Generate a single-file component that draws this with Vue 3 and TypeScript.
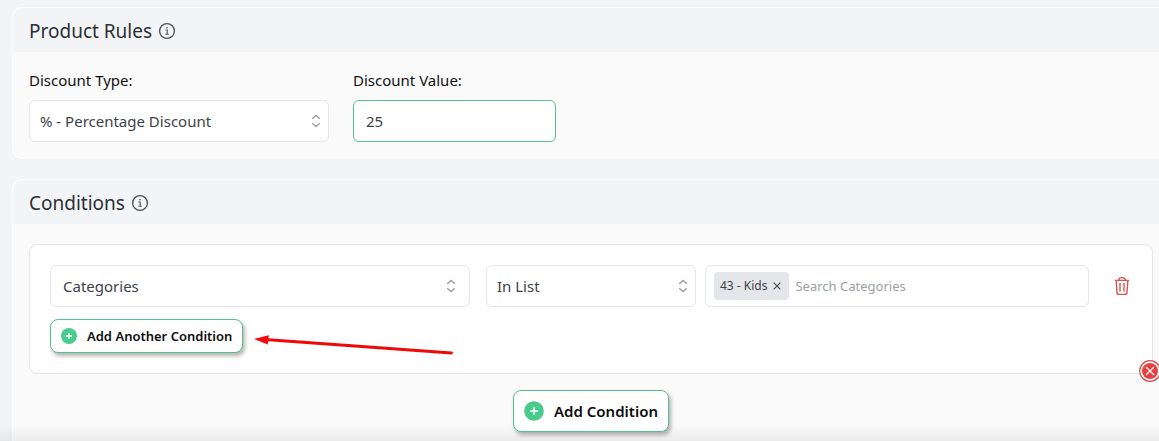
<script setup lang="ts">
import { ref } from 'vue'

const discountType = ref('percentage')
const discountValue = ref('25')
const field = ref('categories')
const operator = ref('in')
const search = ref('')
const tags = ref<string[]>(['43 - Kids'])

function removeTag(tag: string): void {
  tags.value = tags.value.filter((t) => t !== tag)
}
</script>

<template>
  <main class="page">
    <section class="panel">
      <header class="panel-head">
        <h2>Product Rules</h2>
        <button class="icon-btn" type="button" aria-label="About product rules">
          <svg width="18" height="18" viewBox="0 0 18 18" fill="none" stroke="#4a4f56">
            <circle cx="9" cy="9" r="7.4" stroke-width="1.3" />
            <path d="M7.5 8H9.2V12M7.4 12.2H10.8" stroke-width="1.1" />
            <circle cx="9" cy="5.8" r=".8" fill="#4a4f56" stroke="none" />
          </svg>
        </button>
      </header>
      <div class="rules">
        <div class="field type">
          <label for="discount-type">Discount Type:</label>
          <div class="select">
            <select id="discount-type" v-model="discountType">
              <option value="percentage">% - Percentage Discount</option>
            </select>
            <svg class="caret" width="10" height="14" viewBox="0 0 10 14" fill="none" stroke="#9a9ea4" stroke-width="1.3">
              <path d="M1.2 4.8L5 1.4L8.8 4.8M1.2 9.2L5 12.6L8.8 9.2" />
            </svg>
          </div>
        </div>
        <div class="field value">
          <label for="discount-value">Discount Value:</label>
          <input id="discount-value" v-model="discountValue" class="box" type="text" />
        </div>
      </div>
    </section>

    <section class="panel conditions">
      <header class="panel-head">
        <h2>Conditions</h2>
        <button class="icon-btn" type="button" aria-label="About conditions">
          <svg width="18" height="18" viewBox="0 0 18 18" fill="none" stroke="#4a4f56">
            <circle cx="9" cy="9" r="7.4" stroke-width="1.3" />
            <path d="M7.5 8H9.2V12M7.4 12.2H10.8" stroke-width="1.1" />
            <circle cx="9" cy="5.8" r=".8" fill="#4a4f56" stroke="none" />
          </svg>
        </button>
      </header>
      <div class="body">
        <div class="card">
          <div class="row">
            <div class="select wide">
              <select v-model="field" aria-label="Condition field">
                <option value="categories">Categories</option>
              </select>
              <svg class="caret" width="10" height="14" viewBox="0 0 10 14" fill="none" stroke="#9a9ea4" stroke-width="1.3">
                <path d="M1.2 4.8L5 1.4L8.8 4.8M1.2 9.2L5 12.6L8.8 9.2" />
              </svg>
            </div>
            <div class="select operator">
              <select v-model="operator" aria-label="Operator">
                <option value="in">In List</option>
              </select>
              <svg class="caret" width="10" height="14" viewBox="0 0 10 14" fill="none" stroke="#9a9ea4" stroke-width="1.3">
                <path d="M1.2 4.8L5 1.4L8.8 4.8M1.2 9.2L5 12.6L8.8 9.2" />
              </svg>
            </div>
            <div class="tags">
              <span v-for="tag in tags" :key="tag" class="tag">
                {{ tag }}
                <button class="icon-btn" type="button" :aria-label="'Remove ' + tag" @click="removeTag(tag)">
                  <svg width="8" height="8" viewBox="0 0 8 8" stroke="#4b5058" stroke-width="1.2">
                    <path d="M.6 .6L7.4 7.4M7.4 .6L.6 7.4" />
                  </svg>
                </button>
              </span>
              <input v-model="search" type="text" placeholder="Search Categories" aria-label="Search Categories" />
            </div>
            <button class="icon-btn trash" type="button" aria-label="Delete condition">
              <svg width="16" height="20" viewBox="0 0 16 20" fill="none" stroke="#d9534f" stroke-width="1.4">
                <path d="M.8 4.4H15.2M4.6 4.2C4.8 2.3 5.8 1.6 8 1.6S11.2 2.3 11.4 4.2M2.2 4.6L3 16.4C3.1 17.7 3.8 18.4 5 18.4H11C12.2 18.4 12.9 17.7 13 16.4L13.8 4.6" />
                <path d="M6 7V15.4M10 7V15.4" />
              </svg>
            </button>
          </div>
          <div class="another">
            <button class="add small" type="button">
              <svg width="16" height="16" viewBox="0 0 16 16">
                <circle cx="8" cy="8" r="8" fill="#48cb8c" />
                <path d="M8 5V11M5 8H11" stroke="#fff" stroke-width="1.3" />
              </svg>
              Add Another Condition
            </button>
            <svg class="arrow" width="202" height="24" viewBox="0 0 202 24" aria-hidden="true">
              <path d="M12 5.5L198.5 19" stroke="#ee0808" stroke-width="2.8" stroke-linecap="round" />
              <path d="M1 5L15.8 1.2L14.8 10.4Z" fill="#fa0505" />
            </svg>
          </div>
          <button class="icon-btn remove" type="button" aria-label="Remove condition group">
            <svg width="22" height="22" viewBox="0 0 22 22">
              <circle cx="11" cy="11" r="10.3" fill="#fff" stroke="#d94a4a" stroke-width="1.2" />
              <circle cx="11" cy="11" r="8" fill="#e83f42" />
              <path d="M7 7L15 15M15 7L7 15" stroke="#fff" stroke-width="1.2" />
            </svg>
          </button>
        </div>
        <button class="add large" type="button">
          <svg width="20" height="20" viewBox="0 0 20 20">
            <circle cx="10" cy="10" r="9.8" fill="#48cb8c" />
            <path d="M10 6V14M6 10H14" stroke="#fff" stroke-width="1.5" />
          </svg>
          Add Condition
        </button>
      </div>
    </section>
    <div class="fade"></div>
  </main>
</template>

<style>
body {
  background: #f3f4f6;
}
</style>

<style scoped>
* {
  box-sizing: border-box;
}
.page {
  position: relative;
  min-height: 100vh;
  padding: 7px 0 0 12px;
  display: flex;
  flex-direction: column;
  gap: 20px;
  overflow: hidden;
  background: #f3f4f6;
  font: 16px/24px 'Segoe UI', 'Noto Sans', sans-serif;
  color: #3d4249;
}
.panel {
  border: 1px solid #fff;
  border-right: 0;
  border-radius: 10px 0 0 10px;
  background: #fafafa;
}
.conditions {
  flex: 1;
  border-bottom: 0;
  border-radius: 10px 0 0 0;
}
.panel-head {
  display: flex;
  align-items: center;
  gap: 6px;
  height: 44px;
  padding: 2px 16px 0;
  border-radius: 9px 0 0 0;
  background: #f3f4f6;
}
h2 {
  margin: 0;
  font-size: 19px;
  line-height: 28px;
  font-weight: 400;
  color: #2b3036;
}
.icon-btn {
  display: inline-flex;
  padding: 0;
  border: 0;
  background: none;
  cursor: pointer;
}
.rules {
  display: flex;
  gap: 24px;
  padding: 16px;
}
.field {
  display: flex;
  flex-direction: column;
  gap: 8px;
}
.type {
  width: 300px;
}
.value {
  width: 203px;
}
label {
  font-size: 15px;
  line-height: 24px;
  color: #111;
}
.select {
  position: relative;
}
.select select,
.box {
  display: block;
  width: 100%;
  height: 42px;
  margin: 0;
  padding: 0 28px 0 10px;
  border: 1px solid #e4e6e9;
  border-radius: 6px;
  outline: 0;
  appearance: none;
  background: #fff;
  color: inherit;
  font: inherit;
  font-size: 15px;
}
.box {
  padding: 0 12px;
  border-color: #55bf90;
}
.caret {
  position: absolute;
  top: 14px;
  right: 8px;
  pointer-events: none;
}
.body {
  display: flex;
  flex-direction: column;
  align-items: center;
  gap: 16px;
  padding: 20px 6px 9px 16px;
}
.card {
  position: relative;
  width: 100%;
  padding: 20px;
  border: 1px solid #e4e6e9;
  border-radius: 8px;
  background: #fff;
}
.row {
  display: grid;
  grid-template-columns: minmax(0, 436fr) minmax(0, 219fr) minmax(0, 384fr) auto;
  align-items: center;
}
.wide {
  margin-right: 16px;
}
.wide select {
  padding-left: 12px;
}
.wide .caret {
  right: 14px;
}
.operator {
  margin-right: 9px;
}
.tags {
  display: flex;
  align-items: center;
  gap: 6px;
  height: 42px;
  padding: 0 8px;
  border: 1px solid #e4e6e9;
  border-radius: 6px;
}
.tag {
  display: inline-flex;
  align-items: center;
  gap: 6px;
  height: 28px;
  padding: 0 8px 0 6px;
  border-radius: 4px;
  background: #e5e6e9;
  font-size: 12px;
  white-space: nowrap;
}
.tags input {
  flex: 1;
  min-width: 0;
  padding: 0;
  border: 0;
  outline: 0;
  background: none;
  color: inherit;
  font: inherit;
  font-size: 13px;
}
.tags input::placeholder {
  color: #9ca0a8;
  opacity: 1;
}
.trash {
  margin: 0 2px 0 25px;
}
.another {
  position: relative;
  display: flex;
  margin-top: 12px;
}
.arrow {
  position: absolute;
  top: 15px;
  left: 203px;
}
.remove {
  position: absolute;
  right: -9px;
  bottom: -9px;
}
.add {
  position: relative;
  z-index: 2;
  display: inline-flex;
  align-items: center;
  gap: 10px;
  padding: 0 10px;
  border: 1px solid #55bf90;
  border-radius: 8px;
  background: #fff;
  box-shadow: 2px 3px 4px rgba(0, 0, 0, 0.3);
  color: #0c0c0c;
  font: inherit;
  font-weight: 600;
  white-space: nowrap;
  cursor: pointer;
}
.small {
  height: 34px;
  font-size: 13px;
}
.large {
  height: 42px;
  font-size: 15px;
}
.fade {
  position: absolute;
  right: 0;
  bottom: 0;
  left: 0;
  height: 16px;
  background: linear-gradient(rgba(0, 0, 0, 0), rgba(0, 0, 0, 0.06));
  pointer-events: none;
}
</style>
